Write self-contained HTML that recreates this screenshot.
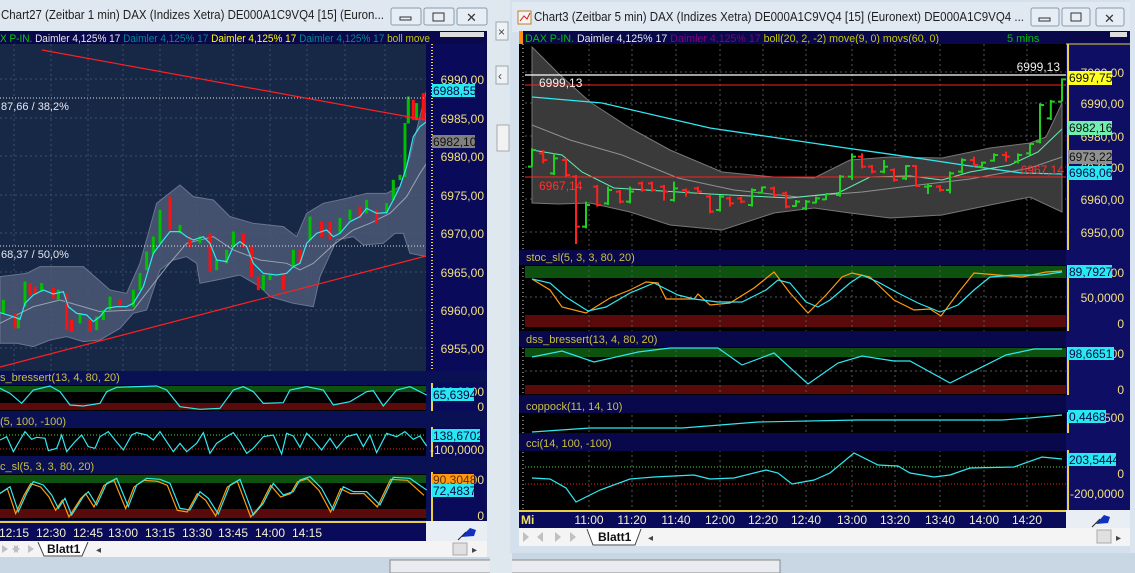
<!DOCTYPE html>
<html><head><meta charset="utf-8"><style>
html,body{margin:0;padding:0;width:1135px;height:573px;overflow:hidden;background:#c9d6e3}
svg{display:block;font-family:"Liberation Sans",sans-serif}
</style></head><body>
<svg width="1135" height="573" viewBox="0 0 1135 573" xmlns="http://www.w3.org/2000/svg">
<defs>
<clipPath id="lc"><rect x="0" y="44" width="426" height="327"/></clipPath>
<clipPath id="rc"><rect x="525" y="44" width="541" height="206"/></clipPath>
</defs>
<rect x="0" y="0" width="1135" height="573" fill="#c9d6e3"/>
<rect x="390" y="560" width="390" height="13" fill="#e8ecf0" stroke="#888"/>
<rect x="490" y="0" width="22" height="573" fill="#dfe7ef"/>
<rect x="496" y="22" width="12" height="18" fill="#eef2f6" stroke="#9aa"/>
<text x="498" y="36" font-size="12" fill="#444">×</text>
<rect x="496" y="66" width="12" height="18" fill="#eef2f6" stroke="#9aa"/>
<text x="498" y="80" font-size="12" fill="#444">‹</text>
<rect x="497" y="125" width="12" height="26" fill="#f2f2f2" stroke="#aaa"/>

<!-- LEFT WINDOW -->
<rect x="0" y="0" width="490" height="556" fill="#dbe5ef"/>
<rect x="0" y="0" width="490" height="31" fill="#dfe8f1"/>
<text x="1" y="19" font-size="13" fill="#1e1e1e" textLength="383" lengthAdjust="spacingAndGlyphs">Chart27 (Zeitbar 1 min)  DAX (Indizes Xetra) DE000A1C9VQ4 [15] (Euron...</text>
<g fill="#e6edf4" stroke="#8a9aac"><rect x="391" y="8" width="30" height="17" rx="2"/><rect x="424" y="8" width="30" height="17" rx="2"/><rect x="457" y="8" width="30" height="17" rx="2"/></g>
<rect x="400" y="17" width="11" height="3" fill="none" stroke="#333"/>
<rect x="433" y="13" width="11" height="8" fill="none" stroke="#333"/>
<text x="466" y="22" font-size="13" fill="#333">✕</text>

<rect x="0" y="31" width="487" height="511" fill="#08084a"/>
<text x="0" y="42" font-size="11" textLength="430" lengthAdjust="spacingAndGlyphs"><tspan fill="#00d000">X P-IN.</tspan><tspan fill="#e8e8e8"> Daimler  4,125% 17 </tspan><tspan fill="#008c8c">Daimler  4,125% 17 </tspan><tspan fill="#ffff00">Daimler  4,125% 17 </tspan><tspan fill="#008c8c">Daimler  4,125% 17 </tspan><tspan fill="#c8c800">boll move</tspan></text>
<rect x="440" y="32" width="44" height="5" fill="#ddd"/>
<rect x="0" y="44" width="426" height="327" fill="#172746"/>
<g clip-path="url(#lc)">
<g stroke="#3c4c6a" stroke-dasharray="2,3" stroke-width="1">
<line x1="0" y1="79" x2="426" y2="79"/><line x1="0" y1="118" x2="426" y2="118"/><line x1="0" y1="156" x2="426" y2="156"/><line x1="0" y1="195" x2="426" y2="195"/><line x1="0" y1="233" x2="426" y2="233"/><line x1="0" y1="272" x2="426" y2="272"/><line x1="0" y1="310" x2="426" y2="310"/><line x1="0" y1="348" x2="426" y2="348"/>
<line x1="14" y1="44" x2="14" y2="371"/><line x1="51" y1="44" x2="51" y2="371"/><line x1="88" y1="44" x2="88" y2="371"/><line x1="123" y1="44" x2="123" y2="371"/><line x1="160" y1="44" x2="160" y2="371"/><line x1="197" y1="44" x2="197" y2="371"/><line x1="233" y1="44" x2="233" y2="371"/><line x1="270" y1="44" x2="270" y2="371"/><line x1="307" y1="44" x2="307" y2="371"/><line x1="345" y1="44" x2="345" y2="371"/><line x1="385" y1="44" x2="385" y2="371"/>
</g>
<g transform="translate(0,90) scale(0.3333)">
<polygon fill="#4b5875" fill-opacity="0.85" stroke="#6a7690" stroke-width="1" vector-effect="non-scaling-stroke" points="0,560 80,550 120,530 250,530 330,600 380,610 420,520 470,340 540,285 580,320 640,330 690,380 760,400 850,410 890,440 920,370 970,340 1040,325 1100,310 1160,310 1200,290 1230,200 1260,80 1280,0 1280,500 1230,490 1210,430 1185,430 1150,460 1090,465 1060,440 1010,450 960,560 940,650 880,640 810,620 780,590 720,555 650,570 600,580 590,520 560,500 520,510 480,540 440,660 400,670 360,715 300,750 250,755 200,740 150,750 100,770 50,760 0,760"/>
<polyline fill="none" stroke="#9aa2b0" stroke-width="1" vector-effect="non-scaling-stroke" points="0,700 100,650 180,630 300,665 400,660 500,530 560,460 640,440 700,480 780,510 860,520 900,540 940,520 1000,465 1060,420 1110,400 1170,370 1220,320 1260,250 1280,220"/>
<g stroke-width="1" vector-effect="non-scaling-stroke">
<g fill="#00c000" stroke="#00c000">
<rect x="6" y="630" width="8" height="40"/><rect x="51" y="680" width="8" height="35"/><rect x="71" y="575" width="8" height="75"/><rect x="121" y="580" width="8" height="25"/><rect x="171" y="600" width="8" height="30"/><rect x="236" y="670" width="8" height="30"/><rect x="286" y="680" width="8" height="40"/><rect x="306" y="660" width="8" height="30"/><rect x="326" y="620" width="8" height="40"/><rect x="396" y="600" width="8" height="50"/><rect x="416" y="550" width="8" height="50"/><rect x="436" y="485" width="8" height="55"/><rect x="456" y="440" width="8" height="50"/><rect x="476" y="360" width="8" height="100"/><rect x="536" y="405" width="8" height="25"/><rect x="596" y="440" width="8" height="20"/><rect x="646" y="510" width="8" height="30"/><rect x="676" y="480" width="8" height="40"/><rect x="696" y="425" width="8" height="45"/><rect x="786" y="555" width="8" height="45"/><rect x="806" y="555" width="8" height="15"/><rect x="876" y="480" width="8" height="50"/><rect x="926" y="380" width="8" height="70"/><rect x="1016" y="385" width="8" height="45"/><rect x="1046" y="360" width="8" height="30"/><rect x="1096" y="330" width="8" height="40"/><rect x="1156" y="340" width="8" height="30"/><rect x="1176" y="270" width="8" height="60"/><rect x="1196" y="255" width="8" height="15"/><rect x="1211" y="100" width="8" height="160"/><rect x="1221" y="20" width="8" height="80"/><rect x="1246" y="40" width="8" height="50"/><rect x="1276" y="70" width="8" height="25"/>
</g>
<g fill="#ff1010" stroke="#ff1010">
<rect x="41" y="670" width="8" height="45"/><rect x="86" y="580" width="8" height="35"/><rect x="101" y="590" width="8" height="20"/><rect x="156" y="595" width="8" height="30"/><rect x="196" y="610" width="8" height="110"/><rect x="211" y="690" width="8" height="35"/><rect x="266" y="690" width="8" height="35"/><rect x="356" y="630" width="8" height="25"/><rect x="506" y="320" width="8" height="100"/><rect x="566" y="440" width="8" height="30"/><rect x="626" y="430" width="8" height="115"/><rect x="726" y="430" width="8" height="40"/><rect x="751" y="470" width="8" height="90"/><rect x="771" y="560" width="8" height="40"/><rect x="846" y="550" width="8" height="50"/><rect x="896" y="480" width="8" height="40"/><rect x="961" y="395" width="8" height="45"/><rect x="986" y="395" width="8" height="55"/><rect x="1076" y="350" width="8" height="35"/><rect x="1126" y="360" width="8" height="40"/><rect x="1236" y="30" width="8" height="60"/><rect x="1266" y="10" width="8" height="80"/>
</g>
</g>
<polyline fill="none" stroke="#30e8f0" stroke-width="1.2" vector-effect="non-scaling-stroke" points="0,668 40,680 60,688 75,640 100,615 130,600 160,612 190,605 205,650 230,670 260,675 280,695 300,680 320,655 350,650 380,650 400,640 430,590 460,490 490,450 510,425 540,425 560,440 580,450 610,440 630,460 650,510 680,515 700,470 720,455 740,470 760,520 790,550 830,555 860,550 880,530 900,520 920,460 950,430 980,420 1000,440 1020,430 1050,395 1080,380 1100,355 1130,370 1160,368 1180,330 1200,290 1220,230 1240,140 1260,110 1280,95"/>
</g>
<line x1="0" y1="98" x2="426" y2="98" stroke="#e0e0e0" stroke-dasharray="1,2"/>
<line x1="0" y1="246" x2="426" y2="246" stroke="#e0e0e0" stroke-dasharray="1,2"/>
<line x1="42" y1="50" x2="426" y2="120" stroke="#ff2020" stroke-width="1.2"/>
<line x1="0" y1="367" x2="426" y2="256" stroke="#ff2020" stroke-width="1.2"/>
<text x="1" y="110" font-size="11" fill="#e8e8f0">87,66 / 38,2%</text>
<text x="1" y="258" font-size="11" fill="#e8e8f0">68,37 / 50,0%</text>
</g>
<rect x="430" y="44" width="55" height="327" fill="#0a0a5a"/>
<line x1="432" y1="44" x2="432" y2="371" stroke="#e8d040" stroke-width="2" stroke-dasharray="1,2"/>
<g font-size="12" fill="#f0e080" text-anchor="end">
<text x="484" y="84">6990,00</text><text x="484" y="123">6985,00</text><text x="484" y="161">6980,00</text><text x="484" y="200">6975,00</text><text x="484" y="238">6970,00</text><text x="484" y="277">6965,00</text><text x="484" y="315">6960,00</text><text x="484" y="353">6955,00</text>
</g>
<rect x="432" y="84" width="43" height="13" fill="#28e8f0"/><text x="433" y="95" font-size="12" fill="#08084a">6988,55</text>
<rect x="432" y="135" width="43" height="13" fill="#808080"/><text x="433" y="146" font-size="12" fill="#101010">6982,10</text>

<rect x="0" y="371" width="487" height="151" fill="#0a1054"/>
<g font-size="11" fill="#c8c040"><text x="0" y="381">s_bressert(13, 4, 80, 20)</text><text x="0" y="425">(5, 100, -100)</text><text x="0" y="470">c_sl(5, 3, 3, 80, 20)</text></g>
<rect x="0" y="385" width="426" height="26" fill="#000"/>
<rect x="0" y="386" width="426" height="6" fill="#0e5210"/><rect x="0" y="403" width="426" height="7" fill="#5a0a0a"/>
<rect x="0" y="428" width="426" height="28" fill="#000"/>
<line x1="0" y1="435" x2="426" y2="435" stroke="#40e040" stroke-dasharray="1,2"/><line x1="0" y1="449" x2="426" y2="449" stroke="#ff2020" stroke-dasharray="1,2"/>
<rect x="0" y="474" width="426" height="46" fill="#000"/>
<rect x="0" y="475" width="426" height="8" fill="#0e5210"/><rect x="0" y="509" width="426" height="9" fill="#5a0a0a"/>
<g transform="translate(0,360) scale(0.3333)" fill="none" stroke-width="1.2">
<polyline stroke="#30e8f0" vector-effect="non-scaling-stroke" points="0,85 30,100 65,130 100,90 150,78 180,95 210,135 250,138 300,130 320,95 350,82 470,78 500,90 540,140 600,148 660,145 700,90 730,80 760,95 790,130 850,128 870,90 920,80 970,90 1000,135 1050,125 1100,95 1120,92 1150,138 1190,90 1230,80 1280,105"/>
<polyline stroke="#30e8f0" vector-effect="non-scaling-stroke" points="0,240 20,230 40,275 60,240 75,215 95,238 110,232 135,235 145,272 170,265 185,225 200,275 225,245 245,225 265,260 285,265 300,230 325,215 345,240 370,270 395,225 410,218 440,225 460,240 480,215 500,245 520,275 540,250 560,275 590,250 610,218 630,280 650,250 680,230 700,218 720,245 740,280 760,265 790,230 820,225 845,282 860,220 880,228 900,262 920,220 940,240 965,270 990,235 1010,265 1040,230 1070,222 1090,260 1110,225 1130,278 1160,220 1190,230 1215,215 1240,238 1260,228 1280,258"/>
<polyline stroke="#ff9a10" transform="translate(-8,6)" vector-effect="non-scaling-stroke" points="0,400 30,380 55,455 80,400 100,365 130,375 155,405 175,445 195,415 215,465 250,410 265,395 290,435 320,370 350,355 385,440 410,375 440,355 480,358 510,370 540,445 570,450 600,395 625,415 655,462 690,375 720,358 760,465 790,430 820,370 850,405 880,395 900,360 930,350 965,385 1000,450 1030,380 1060,395 1100,395 1140,435 1180,352 1230,355 1280,400"/>
<polyline stroke="#30e8f0" vector-effect="non-scaling-stroke" points="0,400 30,380 55,455 80,400 100,365 130,375 155,405 175,445 195,415 215,465 250,410 265,395 290,435 320,370 350,355 385,440 410,375 440,355 480,358 510,370 540,445 570,450 600,395 625,415 655,462 690,375 720,358 760,465 790,430 820,370 850,405 880,395 900,360 930,350 965,385 1000,450 1030,380 1060,395 1100,395 1140,435 1180,352 1230,355 1280,390"/>
</g>
<g fill="#0a0a5a"><rect x="430" y="383" width="55" height="28"/><rect x="430" y="427" width="55" height="30"/><rect x="430" y="472" width="55" height="50"/></g>
<g stroke="#e8d040" stroke-width="2"><line x1="432" y1="383" x2="432" y2="411"/><line x1="432" y1="427" x2="432" y2="457"/><line x1="432" y1="472" x2="432" y2="521"/></g>
<g font-size="12" fill="#f0e080" text-anchor="end"><text x="484" y="396">100,0000</text><text x="484" y="411">0</text><text x="484" y="454">-100,0000</text><text x="484" y="484">100,0000</text><text x="484" y="520">0</text></g>
<rect x="432" y="388" width="42" height="13" fill="#28e8f0"/><text x="433" y="399" font-size="12" fill="#08084a">65,6394</text>
<rect x="432" y="429" width="48" height="13" fill="#28e8f0"/><text x="433" y="440" font-size="12" fill="#08084a">138,6702</text>
<rect x="432" y="474" width="42" height="10" fill="#ff9a10"/><text x="433" y="484" font-size="12" fill="#603000">90,3048</text>
<rect x="432" y="484" width="42" height="13" fill="#28e8f0"/><text x="433" y="495" font-size="12" fill="#08084a">72,4837</text>
<rect x="0" y="521" width="426" height="2" fill="#e8d040"/>
<rect x="0" y="523" width="426" height="18" fill="#0a0a5a"/>
<rect x="426" y="521" width="61" height="20" fill="#e8eef4"/>
<path d="M461 537 L470 528 L476 530 L474 536 Z" fill="#1030c0"/><line x1="458" y1="540" x2="466" y2="532" stroke="#222"/>
<g font-size="12" fill="#f0f0d0" text-anchor="middle"><text x="14" y="537">12:15</text><text x="51" y="537">12:30</text><text x="88" y="537">12:45</text><text x="123" y="537">13:00</text><text x="160" y="537">13:15</text><text x="197" y="537">13:30</text><text x="233" y="537">13:45</text><text x="270" y="537">14:00</text><text x="307" y="537">14:15</text></g>
<rect x="0" y="541" width="487" height="16" fill="#f4f4f4"/>
<g fill="#c0c0c0"><path d="M2 545 L8 549 L2 553 Z"/><path d="M18 545 L12 549 L18 553 Z"/><path d="M14 545 L20 549 L14 553 Z"/><path d="M28 545 L34 549 L28 553 Z"/></g>
<path d="M38 542 L44 556 L82 556 L88 542" fill="#fff" stroke="#444"/>
<text x="47" y="553" font-size="12" font-weight="bold" fill="#111">Blatt1</text>
<text x="96" y="553" font-size="10" fill="#444">◂</text>
<rect x="453" y="543" width="14" height="12" fill="#e0e0e0" stroke="#aaa"/>
<text x="472" y="553" font-size="10" fill="#444">▸</text>
<rect x="487" y="31" width="3" height="526" fill="#dfe7ef"/>

<!-- RIGHT WINDOW -->
<rect x="510" y="0" width="625" height="553" fill="#d4e0ec"/>
<rect x="512" y="2" width="623" height="30" fill="#e0e9f2"/>
<rect x="518" y="11" width="13" height="13" fill="#f4f4f4" stroke="#c08020"/><path d="M520 21 L524 16 L527 19 L530 13" stroke="#d02020" fill="none"/>
<text x="534" y="21" font-size="13" fill="#1e1e1e" textLength="490" lengthAdjust="spacingAndGlyphs">Chart3 (Zeitbar 5 min)  DAX (Indizes Xetra) DE000A1C9VQ4 [15] (Euronext) DE000A1C9VQ4 ...</text>
<g fill="#e6edf4" stroke="#8a9aac"><rect x="1031" y="8" width="28" height="18" rx="2"/><rect x="1062" y="8" width="28" height="18" rx="2"/><rect x="1096" y="8" width="28" height="18" rx="2"/></g>
<rect x="1039" y="18" width="11" height="3" fill="none" stroke="#333"/>
<rect x="1071" y="13" width="10" height="8" fill="none" stroke="#333"/>
<text x="1104" y="23" font-size="13" fill="#333">✕</text>

<rect x="519" y="31" width="611" height="497" fill="#08084a"/>
<rect x="519" y="31" width="4" height="13" fill="#ff9010"/>
<text x="525" y="42" font-size="11" textLength="414" lengthAdjust="spacingAndGlyphs"><tspan fill="#00c000">DAX P-IN.</tspan><tspan fill="#e8e8e8"> Daimler  4,125% 17 </tspan><tspan fill="#800080">Daimler  4,125% 17 </tspan><tspan fill="#c8c800">boll(20, 2, -2) move(9, 0) movs(60, 0)</tspan></text>
<text x="1007" y="42" font-size="11" fill="#00c000">5 mins</text>
<rect x="1110" y="32" width="17" height="5" fill="#ddd"/>
<rect x="519" y="44" width="6" height="466" fill="#000"/>
<line x1="523" y1="44" x2="523" y2="510" stroke="#ddd" stroke-dasharray="1,3"/>
<rect x="525" y="44" width="541" height="206" fill="#000"/>
<g clip-path="url(#rc)">
<g stroke="#555" stroke-dasharray="2,3">
<line x1="525" y1="72" x2="1066" y2="72"/><line x1="525" y1="103" x2="1066" y2="103"/><line x1="525" y1="136" x2="1066" y2="136"/><line x1="525" y1="167" x2="1066" y2="167"/><line x1="525" y1="199" x2="1066" y2="199"/><line x1="525" y1="232" x2="1066" y2="232"/>
<line x1="589" y1="44" x2="589" y2="250"/><line x1="632" y1="44" x2="632" y2="250"/><line x1="676" y1="44" x2="676" y2="250"/><line x1="720" y1="44" x2="720" y2="250"/><line x1="763" y1="44" x2="763" y2="250"/><line x1="806" y1="44" x2="806" y2="250"/><line x1="852" y1="44" x2="852" y2="250"/><line x1="895" y1="44" x2="895" y2="250"/><line x1="940" y1="44" x2="940" y2="250"/><line x1="984" y1="44" x2="984" y2="250"/><line x1="1027" y1="44" x2="1027" y2="250"/>
</g>
<polygon fill="#3a3a3a" stroke="#777" points="532,47 558,73 590,102 630,128 670,150 722,172 774,177 814,178 850,160 890,157 942,158 990,148 1030,143 1046,137 1062,103 1062,212 1030,197 990,205 942,215 890,218 850,213 814,208 774,213 722,230 670,225 630,212 590,203 558,204 532,203"/>
<polyline fill="none" stroke="#909090" points="532,125 570,140 622,155 678,178 734,190 798,197 862,192 910,186 970,179 1030,168 1062,157"/>
<polyline fill="none" stroke="#30e8f0" stroke-width="1.3" points="532,97 602,103 710,128 846,148 910,157 970,166 1022,173 1062,174"/>
<polyline fill="none" stroke="#60f0b0" points="532,150 562,155 582,172 614,188 662,191 710,194 790,198 838,193 870,177 910,176 942,180 970,172 1010,165 1038,152 1062,129"/>
<line x1="525" y1="75" x2="1066" y2="75" stroke="#fff" stroke-width="1.3"/>
<line x1="525" y1="85" x2="1066" y2="85" stroke="#ff2020"/>
<line x1="525" y1="177" x2="1066" y2="177" stroke="#ff2020"/>
<g transform="translate(510,40) scale(0.4,0.3333)" stroke-width="2">
<g stroke="#20d020" fill="none">
<path vector-effect="non-scaling-stroke" d="M55 325V380M45 380H55M55 330H65 M110 340V405M100 400H110M110 355H120 M190 485V565M180 560H190M190 495H200 M245 440V495M235 490H245M245 450H255 M300 440V490M290 485H300M300 455H310 M410 425V485M400 480H410M410 445H420 M525 465V515M515 510H525M525 470H535 M605 445V500M595 495H605M605 450H615 M630 440V460M620 458H630M630 442H640 M715 480V500M705 498H715M715 485H725 M740 480V510M730 505H740M740 485H750 M765 470V490M755 488H765M765 475H775 M790 460V480M780 478H790M790 462H800 M825 405V470M815 465H825M825 410H835 M855 340V420M845 410H855M855 350H865 M935 360V400M925 395H935M935 380H945 M990 375V420M980 415H990M990 378H1000 M1045 430V462M1035 440H1045M1045 438H1055 M1100 395V460M1090 450H1100M1100 400H1110 M1130 355V400M1120 395H1130M1130 360H1140 M1180 365V385M1170 380H1180M1180 368H1190 M1210 340V365M1200 362H1210M1210 345H1220 M1270 340V370M1260 365H1270M1270 345H1280 M1300 310V345M1290 340H1300M1300 312H1310 M1325 190V310M1315 305H1325M1325 195H1335 M1352 180V240M1342 235H1352M1352 185H1362 M1380 115V185M1370 185H1380M1380 118H1390"/>
</g>
<g stroke="#ff2020" fill="none">
<path vector-effect="non-scaling-stroke" d="M83 330V370M73 340H83M83 360H93 M140 355V410M130 360H140M140 405H150 M165 405V612M155 410H165M165 560H175 M218 435V500M208 440H218M218 495H228 M275 450V490M265 455H275M275 485H285 M330 425V455M320 430H330M330 450H340 M355 425V455M345 430H355M355 450H365 M385 435V482M375 440H385M385 455H395 M440 445V470M430 450H440M440 455H450 M470 440V460M460 445H470M470 455H480 M500 465V520M490 470H500M500 515H510 M550 470V500M540 475H550M550 490H560 M578 470V490M568 475H578M578 485H588 M660 440V470M650 445H660M660 465H670 M690 455V505M680 460H690M690 500H700 M880 340V385M870 350H880M880 380H890 M905 375V400M895 380H905M905 395H915 M960 385V425M950 390H960M960 420H970 M1015 375V440M1005 378H1015M1015 438H1025 M1075 435V455M1065 440H1075M1075 450H1085 M1160 350V380M1150 360H1160M1160 375H1170 M1240 335V365M1230 345H1240M1240 350H1250"/>
</g>
</g>
</g>
<text x="1060" y="71" font-size="12" fill="#f0f0f0" text-anchor="end">6999,13</text>
<text x="539" y="87" font-size="12" fill="#f0f0f0">6999,13</text>
<text x="539" y="190" font-size="12" fill="#ff3030">6967,14</text>
<text x="1064" y="174" font-size="12" fill="#ff3030" text-anchor="end">6967,14</text>
<rect x="1066" y="44" width="64" height="466" fill="#0e0e64"/>
<line x1="1068" y1="44" x2="1068" y2="250" stroke="#e8d040" stroke-width="2"/>
<line x1="1066" y1="44" x2="1130" y2="44" stroke="#e8d040"/>
<g font-size="12" fill="#f0e080" text-anchor="end">
<text x="1124" y="77">7000,00</text><text x="1124" y="108">6990,00</text><text x="1124" y="141">6980,00</text><text x="1124" y="172">6970,00</text><text x="1124" y="204">6960,00</text><text x="1124" y="237">6950,00</text>
</g>
<rect x="1068" y="71" width="44" height="14" fill="#ffff20"/><text x="1069" y="82" font-size="12" fill="#101010">6997,75</text>
<rect x="1068" y="121" width="44" height="14" fill="#70f0b0"/><text x="1069" y="132" font-size="12" fill="#101010">6982,16</text>
<rect x="1068" y="150" width="44" height="14" fill="#909090"/><text x="1069" y="161" font-size="12" fill="#101010">6973,22</text>
<rect x="1068" y="166" width="44" height="14" fill="#28e8f0"/><text x="1069" y="177" font-size="12" fill="#08084a">6968,06</text>
<!-- right indicators -->
<rect x="525" y="265" width="541" height="66" fill="#000"/>
<rect x="525" y="266" width="541" height="12" fill="#0e5210"/><rect x="525" y="315" width="541" height="12" fill="#5a0a0a"/>
<rect x="525" y="347" width="541" height="48" fill="#000"/>
<rect x="525" y="348" width="541" height="9" fill="#0e5210"/><rect x="525" y="385" width="541" height="9" fill="#5a0a0a"/>
<rect x="525" y="413" width="541" height="20" fill="#000"/>
<rect x="525" y="451" width="541" height="59" fill="#000"/>
<g stroke="#555" stroke-dasharray="2,3">
<line x1="589" y1="265" x2="589" y2="510"/><line x1="632" y1="265" x2="632" y2="510"/><line x1="676" y1="265" x2="676" y2="510"/><line x1="720" y1="265" x2="720" y2="510"/><line x1="763" y1="265" x2="763" y2="510"/><line x1="806" y1="265" x2="806" y2="510"/><line x1="852" y1="265" x2="852" y2="510"/><line x1="895" y1="265" x2="895" y2="510"/><line x1="940" y1="265" x2="940" y2="510"/><line x1="984" y1="265" x2="984" y2="510"/><line x1="1027" y1="265" x2="1027" y2="510"/>
<line x1="525" y1="297" x2="1066" y2="297"/><line x1="525" y1="371" x2="1066" y2="371"/>
</g>
<g fill="#08084a"><rect x="519" y="250" width="547" height="15"/><rect x="519" y="331" width="547" height="16"/><rect x="519" y="395" width="547" height="18"/><rect x="519" y="433" width="547" height="18"/></g>
<g font-size="11" fill="#c8c040"><text x="526" y="261">stoc_sl(5, 3, 3, 80, 20)</text><text x="526" y="343">dss_bressert(13, 4, 80, 20)</text><text x="526" y="410">coppock(11, 14, 10)</text><text x="526" y="447">cci(14, 100, -100)</text></g>
<line x1="525" y1="467" x2="1066" y2="467" stroke="#40e040" stroke-dasharray="1,2"/>
<line x1="525" y1="484" x2="1066" y2="484" stroke="#ff2020" stroke-dasharray="1,2"/>
<g fill="none" stroke-width="1.2">
<polyline stroke="#ff9a10" points="532,279 550,290 562,307 586,313 610,298 630,290 646,282 658,283 666,299 694,299 698,294 710,305 730,303 754,288 774,272 790,293 808,313 826,295 842,277 852,273 870,277 894,300 914,310 930,309 941,316 958,293 974,273 998,275 1022,277 1046,272 1062,271"/>
<polyline stroke="#30e8f0" points="532,279 550,283 566,297 588,311 606,307 630,293 654,283 678,295 694,299 718,302 742,302 766,290 778,280 790,283 806,302 818,307 830,300 850,283 862,275 878,282 898,293 918,303 940,312 958,305 974,290 990,277 1014,275 1042,275 1062,272"/>
<polyline stroke="#30e8f0" points="532,357 562,351 594,362 638,352 670,348 718,348 742,365 774,353 808,384 838,363 862,356 894,361 910,361 950,383 1006,355 1034,349 1062,349"/>
<polyline stroke="#30e8f0" points="532,432 590,428 682,428 758,422 858,420 1002,420 1030,418 1062,415"/>
<polyline stroke="#30e8f0" points="532,478 550,479 566,488 576,502 600,490 630,479 654,477 694,475 710,479 734,478 766,470 778,473 792,484 814,480 830,473 854,453 878,465 898,466 910,473 934,477 950,475 970,468 1014,467 1042,457 1062,459"/>
</g>
<g stroke="#e8d040" stroke-width="2"><line x1="1068" y1="265" x2="1068" y2="331"/><line x1="1068" y1="347" x2="1068" y2="395"/><line x1="1068" y1="412" x2="1068" y2="433"/><line x1="1068" y1="450" x2="1068" y2="510"/></g>
<g font-size="12" fill="#f0e080" text-anchor="end"><text x="1124" y="277">100</text><text x="1124" y="302">50,0000</text><text x="1124" y="328">0</text><text x="1124" y="358">100</text><text x="1124" y="394">0</text><text x="1124" y="422">500</text><text x="1124" y="478">0</text><text x="1124" y="498">-200,0000</text></g>
<rect x="1068" y="265" width="44" height="13" fill="#28e8f0"/><text x="1069" y="276" font-size="12" fill="#08084a">89,7927</text>
<rect x="1068" y="347" width="46" height="13" fill="#28e8f0"/><text x="1069" y="358" font-size="12" fill="#08084a">98,6651</text>
<rect x="1068" y="410" width="38" height="13" fill="#28e8f0"/><text x="1069" y="421" font-size="12" fill="#08084a">0,4468</text>
<rect x="1068" y="453" width="48" height="13" fill="#28e8f0"/><text x="1069" y="464" font-size="12" fill="#08084a">203,5444</text>
<rect x="519" y="510" width="547" height="2" fill="#e8d040"/>
<rect x="519" y="512" width="547" height="16" fill="#0a0a5a"/>
<rect x="1066" y="510" width="64" height="18" fill="#e8eef4"/>
<path d="M1096 524 L1104 515 L1110 517 L1108 523 Z" fill="#1030c0"/><line x1="1092" y1="527" x2="1100" y2="519" stroke="#222"/>
<text x="521" y="524" font-size="12" font-weight="bold" fill="#f0e060">Mi</text>
<g font-size="12" fill="#f0f0d0" text-anchor="middle"><text x="589" y="524">11:00</text><text x="632" y="524">11:20</text><text x="676" y="524">11:40</text><text x="720" y="524">12:00</text><text x="763" y="524">12:20</text><text x="806" y="524">12:40</text><text x="852" y="524">13:00</text><text x="895" y="524">13:20</text><text x="940" y="524">13:40</text><text x="984" y="524">14:00</text><text x="1027" y="524">14:20</text></g>
<rect x="519" y="528" width="611" height="18" fill="#f4f4f4"/>
<g fill="#c0c0c0"><path d="M523 532 L529 537 L523 542 Z"/><path d="M543 532 L537 537 L543 542 Z"/><path d="M555 532 L561 537 L555 542 Z"/><path d="M570 532 L576 537 L570 542 Z"/></g>
<path d="M587 529 L593 545 L635 545 L641 529" fill="#fff" stroke="#444"/>
<text x="598" y="541" font-size="12" font-weight="bold" fill="#111">Blatt1</text>
<text x="648" y="541" font-size="10" fill="#444">◂</text>
<rect x="1097" y="530" width="14" height="13" fill="#e0e0e0" stroke="#aaa"/>
<text x="1116" y="541" font-size="10" fill="#444">▸</text>
<rect x="1130" y="0" width="5" height="553" fill="#dbe5ef"/>
</svg>
</body></html>
